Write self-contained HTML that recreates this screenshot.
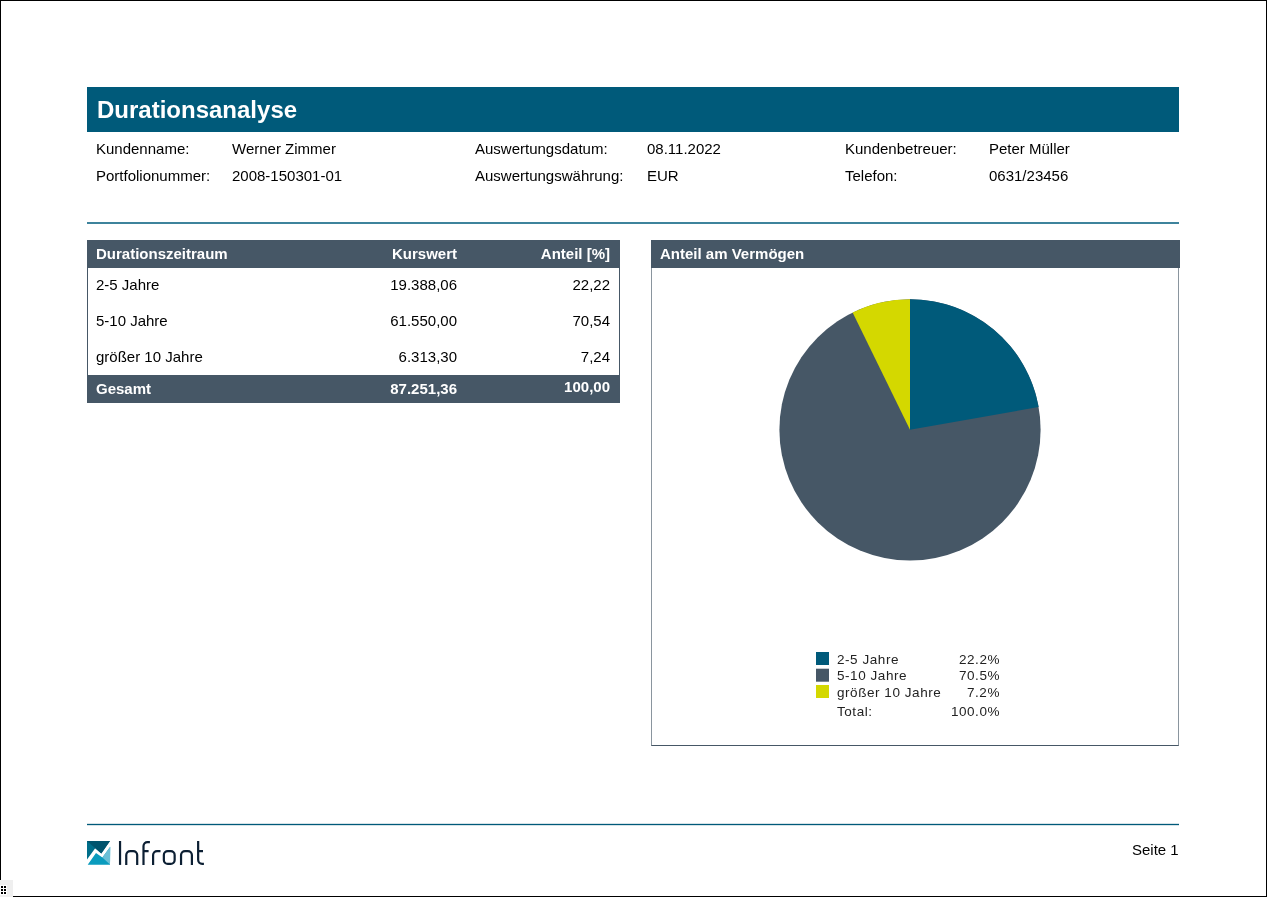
<!DOCTYPE html>
<html><head><meta charset="utf-8">
<style>
html,body{margin:0;padding:0;background:#fff;}
body{width:1267px;height:897px;position:relative;overflow:hidden;will-change:transform;font-family:"Liberation Sans",sans-serif;color:#000;}
.frame{position:absolute;left:0;top:0;width:1265px;height:895px;border:1px solid #000;}
.abs{position:absolute;white-space:nowrap;}
.title{position:absolute;left:87px;top:87px;width:1092px;height:45px;background:#005a7a;}
.title span{position:absolute;left:10px;top:9px;font-size:24px;font-weight:bold;color:#fff;line-height:27px;}
.info{font-size:15px;line-height:17px;}
.sep{position:absolute;left:87px;top:222px;width:1092px;height:2px;background:#3e839c;}
.tbl{position:absolute;left:87px;top:240px;width:533px;}
.th{position:absolute;left:0;width:533px;height:28px;background:#465766;color:#fff;font-weight:bold;font-size:15px;}
.tb{position:absolute;left:0;top:28px;width:531px;height:107px;border-left:1px solid #465766;border-right:1px solid #465766;}
.cell{position:absolute;white-space:nowrap;font-size:15px;line-height:17px;}
.r{text-align:right;}
.panel{position:absolute;left:651px;top:240px;width:528px;height:506px;}
.ph{position:absolute;left:0;top:0;width:529px;height:28px;background:#465766;}
.pb{position:absolute;left:0;top:28px;width:526px;height:477px;border-left:1px solid #8a959e;border-right:1px solid #8a959e;border-bottom:1px solid #465766;}
.leg{font-family:"Liberation Sans",sans-serif;font-size:13.5px;line-height:15px;color:#222;letter-spacing:0.55px;}
.sw{position:absolute;width:13px;height:13px;}
.fline{position:absolute;left:87px;top:824px;width:1092px;height:1px;background:#005a7a;box-shadow:0 -1px 0 #d5e2e7,0 1px 0 #d5e2e7;}
.grip{position:absolute;left:0;top:880px;width:13px;height:17px;background:#efefef;}
.grip i{position:absolute;width:2px;height:2px;background:#000;}
</style></head>
<body>
<div class="frame"></div>

<div class="title"><span>Durationsanalyse</span></div>

<div class="abs info" style="left:96px;top:140px">Kundenname:</div>
<div class="abs info" style="left:232px;top:140px">Werner Zimmer</div>
<div class="abs info" style="left:475px;top:140px">Auswertungsdatum:</div>
<div class="abs info" style="left:647px;top:140px">08.11.2022</div>
<div class="abs info" style="left:845px;top:140px">Kundenbetreuer:</div>
<div class="abs info" style="left:989px;top:140px">Peter Müller</div>

<div class="abs info" style="left:96px;top:167px">Portfolionummer:</div>
<div class="abs info" style="left:232px;top:167px">2008-150301-01</div>
<div class="abs info" style="left:475px;top:167px">Auswertungswährung:</div>
<div class="abs info" style="left:647px;top:167px">EUR</div>
<div class="abs info" style="left:845px;top:167px">Telefon:</div>
<div class="abs info" style="left:989px;top:167px">0631/23456</div>

<div class="sep"></div>

<div class="tbl">
  <div class="th" style="top:0">
    <div class="cell" style="left:9px;top:5px">Durationszeitraum</div>
    <div class="cell r" style="right:163px;top:5px">Kurswert</div>
    <div class="cell r" style="right:10px;top:5px">Anteil [%]</div>
  </div>
  <div class="tb">
    <div class="cell" style="left:8px;top:8px">2-5 Jahre</div>
    <div class="cell r" style="right:162px;top:8px">19.388,06</div>
    <div class="cell r" style="right:9px;top:8px">22,22</div>
    <div class="cell" style="left:8px;top:44px">5-10 Jahre</div>
    <div class="cell r" style="right:162px;top:44px">61.550,00</div>
    <div class="cell r" style="right:9px;top:44px">70,54</div>
    <div class="cell" style="left:8px;top:80px">größer 10 Jahre</div>
    <div class="cell r" style="right:162px;top:80px">6.313,30</div>
    <div class="cell r" style="right:9px;top:80px">7,24</div>
  </div>
  <div class="th" style="top:135px">
    <div class="cell" style="left:9px;top:5px">Gesamt</div>
    <div class="cell r" style="right:163px;top:5px">87.251,36</div>
    <div class="cell r" style="right:10px;top:3px">100,00</div>
  </div>
</div>

<div class="panel">
  <div class="ph"><div class="cell" style="left:9px;top:5px;color:#fff;font-weight:bold">Anteil am Vermögen</div></div>
  <div class="pb"></div>
</div>

<svg class="abs" style="left:0;top:0" width="1267" height="897" viewBox="0 0 1267 897">
  <circle cx="910" cy="429.8" r="130.6" fill="#465766"/>
  <path fill="#005a7a" d="M910,429.8 L910,299.2 A130.6,130.6 0 0 1 1038.61,407.1 Z"/>
  <path fill="#d4d800" d="M910,429.8 L852.62,312.48 A130.6,130.6 0 0 1 910,299.2 Z"/>
  <rect x="816" y="652" width="13" height="13" fill="#005a7a"/>
  <rect x="816" y="668.7" width="13" height="13" fill="#465766"/>
  <rect x="816" y="685" width="13" height="13" fill="#d4d800"/>
  <g>
    <path fill="#006e8a" d="M87,841 L110,841 L101.3,853.5 L95.2,848.2 L87,859.6 Z"/>
    <path fill="#00546e" d="M87,841 L110,841 L101.3,853.5 Z"/>
    <path fill="#0a9bbd" d="M87.7,864.8 L110,864.8 L110.2,846.7 L102.4,857.4 L96,853 Z"/>
    <path fill="#6bbfd6" d="M102.4,857.4 L110.2,846.7 L110,864.4 Z"/>
  </g>
  <g fill="none" stroke="#0c1f33" stroke-width="2.2">
    <path d="M120.05,841 V864.9"/>
    <path d="M126.25,864.9 V855.05 A4,4 0 0 1 130.25,851.05 H133.2 A4,4 0 0 1 137.2,855.05 V864.9"/>
    <path d="M143.5,864.9 V846.1 A4,4 0 0 1 147.5,842.1 H149.9 M143.5,851.2 H148.6"/>
    <path d="M153.1,864.9 V855.1 A4,4 0 0 1 157.1,851.1 H160.5"/>
    <rect x="163.85" y="851.15" width="10.8" height="12.7" rx="3.9"/>
    <path d="M181.05,864.9 V855.1 A4,4 0 0 1 185.05,851.1 H187.9 A4,4 0 0 1 191.9,855.1 V864.9"/>
    <path d="M198.15,841 V859.8 A4,4 0 0 0 202.15,863.8 H203.9 M198.15,851.2 H203"/>
  </g>
</svg>
<div class="abs leg" style="left:837px;top:652px">2-5 Jahre</div>
<div class="abs leg" style="left:837px;top:668px">5-10 Jahre</div>
<div class="abs leg" style="left:837px;top:685px">größer 10 Jahre</div>
<div class="abs leg" style="left:837px;top:704px">Total:</div>
<div class="abs leg r" style="right:267px;top:652px">22.2%</div>
<div class="abs leg r" style="right:267px;top:668px">70.5%</div>
<div class="abs leg r" style="right:267px;top:685px">7.2%</div>
<div class="abs leg r" style="right:267px;top:704px">100.0%</div>

<div class="fline"></div>

<div class="abs" style="left:1132px;top:841px;font-size:15px;line-height:17px">Seite 1</div>

<div class="grip"><b style="position:absolute;left:0;top:5px;width:7px;height:10px;background:#fff"></b><i style="left:1px;top:6px"></i><i style="left:4px;top:6px"></i><i style="left:1px;top:9px"></i><i style="left:4px;top:9px"></i><i style="left:1px;top:12px"></i><i style="left:4px;top:12px"></i></div>
</body></html>
